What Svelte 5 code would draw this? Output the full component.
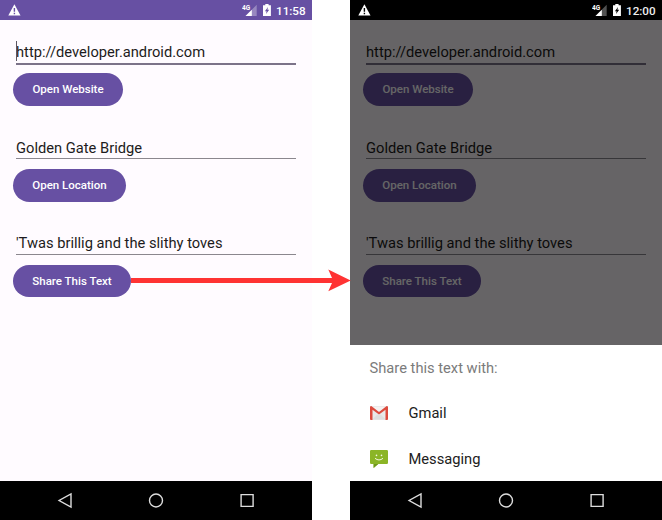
<script>
  const phones = [
    { time: '11:58', sharing: false },
    { time: '12:00', sharing: true }
  ];
  const rows = [
    { value: 'http://developer.android.com', action: 'Open Website', width: 110 },
    { value: 'Golden Gate Bridge', action: 'Open Location', width: 113 },
    { value: "'Twas brillig and the slithy toves", action: 'Share This Text', width: 118 }
  ];
</script>

<main>
  {#each phones as phone}
    <section class="phone" class:sharing={phone.sharing}>
      <header>
        <svg class="warn" width="13" height="12" viewBox="0 0 13 12">
          <path d="M6.4.3 12.5 11.4H.3Z" fill="#fff" />
          <path d="M6.4 4v3.8M6.4 8.8v1.4" stroke="var(--bar)" stroke-width="1.4" />
        </svg>
        <span class="spacer"></span>
        <svg class="status" width="30" height="14" viewBox="0 0 30 14">
          <path d="M14.7 1.8V13H3.5Z" fill="#fff" opacity=".32" />
          <path d="M9.8 6.7V13H3.5Z" fill="#fff" />
          <text x="0" y="6.7" class="net">4G</text>
          <path d="M23.3 1h3.3v1.2h2.3V13H21V2.2h2.3Z" fill="#fff" />
          <path d="M26 4 22.9 8.2H24.6L24 11 27.2 6.8H25.4Z" fill="var(--bar)" />
        </svg>
        <time>{phone.time}</time>
      </header>

      <div class="screen">
        {#each rows as row, i}
          <div class="row">
            <div class="field" class:focused={i === 0}>
              {#if i === 0 && !phone.sharing}<i class="caret"></i>{/if}
              <span>{row.value}</span>
            </div>
            <button style:width="{row.width}px">{row.action}</button>
          </div>
        {/each}
        {#if phone.sharing}
          <div class="scrim"></div>
          <div class="sheet">
            <h2>Share this text with:</h2>
            <div class="app">
              <svg width="18" height="14" viewBox="0 0 18 14">
                <rect width="18" height="14" rx="1" fill="#e9e9e9" />
                <path d="M2.4 13.5 7.4 8.4 9 9.6l1.6-1.2 5 5.1Z" fill="#dedede" />
                <path d="M2 .7 9 6 16 .7Z" fill="#f5f3f2" />
                <path d="M0 1.2Q0 0 1.3 0L9 5.9 16.7 0Q18 0 18 1.2V13q0 1-1 1H15.5V3.7L9 8.4 2.5 3.7V14H1q-1 0-1-1Z" fill="#dc4b3e" />
              </svg>
              <span>Gmail</span>
            </div>
            <div class="app">
              <svg width="18" height="18" viewBox="0 0 18 18">
                <path d="M1.2 0H16.8Q18 0 18 1.2V12.8Q18 14 16.8 14H8.2L3.6 18V14H1.2Q0 14 0 12.8V1.2Q0 0 1.2 0Z" fill="#8bb526" />
                <path d="M3.6 14H8.2L3.6 18Z" fill="#6f981c" />
                <path d="M5 8.3Q9 11.6 13 8.3" fill="none" stroke="#f2f7df" stroke-width="1" />
                <circle cx="6.5" cy="5.4" r=".8" fill="#f2f7df" />
                <circle cx="11.5" cy="5.4" r=".8" fill="#f2f7df" />
              </svg>
              <span>Messaging</span>
            </div>
          </div>
        {/if}
      </div>

      <nav>
        <svg width="16" height="17" viewBox="0 0 16 17"><path d="M14 1.9V15.1L2.1 8.5Z" /></svg>
        <svg width="16" height="17" viewBox="0 0 16 17"><circle cx="8" cy="8.5" r="6.5" /></svg>
        <svg width="16" height="17" viewBox="0 0 16 17"><path d="M2.1 2.6h12v11.8h-12Z" /></svg>
      </nav>
    </section>
  {/each}

  <svg class="arrow" width="220" height="24" viewBox="0 0 220 24">
    <path d="M0 10H201L197.3 1.5 219.7 12.5 197.3 23.3 201 15H0Z" fill="#ff3333" />
  </svg>
</main>

<style>
  :global(body) { background: #fff; }
  main {
    position: relative;
    display: flex;
    gap: 38px;
    width: 662px;
    height: 520px;
    overflow: hidden;
    font-family: Roboto, sans-serif;
    color: #1d1b20;
  }
  .phone {
    --bar: #6750a3;
    width: 312px;
    display: flex;
    flex-direction: column;
  }
  .sharing { --bar: #000; }
  header {
    height: 20px;
    display: flex;
    align-items: center;
    box-sizing: border-box;
    padding: 0 7px 0 8px;
    background: var(--bar);
    color: #fff;
  }
  .spacer { flex: 1; }
  .status { margin: 0 4px 1px 0; }
  .net { font: 700 6.5px Roboto, sans-serif; fill: #fff; }
  time {
    width: 29px;
    font-size: 11.7px;
    font-weight: 500;
    line-height: 20px;
    white-space: nowrap;
    padding-top: 1px;
  }
  .sharing header { color: #eee; }
  .screen {
    position: relative;
    height: 461px;
    box-sizing: border-box;
    padding: 18px 16px 0;
    background: #fffbff;
  }
  .row { height: 95.6px; }
  .field {
    position: relative;
    height: 24.8px;
    border-bottom: 1px solid #8b878e;
    margin-bottom: 9.8px;
    font-size: 14.7px;
    line-height: 29px;
    white-space: nowrap;
  }
  .field.focused {
    border-bottom: 2px solid #7c7389;
    margin-bottom: 8.6px;
    line-height: 28px;
  }
  .caret { position: absolute; left: 0; top: 3px; width: 1px; height: 20px; background: #5c5763; }
  button {
    display: block;
    height: 32.5px;
    margin-left: -3px;
    padding: 0;
    border: 0;
    border-radius: 17px;
    background: #6750a3;
    color: #fff;
    font: 500 11.5px/33.4px Roboto, sans-serif;
    white-space: nowrap;
  }
  .scrim { position: absolute; inset: 0; background: rgba(0, 0, 0, .6); }
  .sheet {
    position: absolute;
    left: 0;
    right: 0;
    bottom: 0;
    height: 136px;
    box-sizing: border-box;
    padding: 0 19.5px;
    background: #fff;
  }
  h2 {
    margin: 0;
    height: 45.5px;
    font-size: 14.7px;
    font-weight: 400;
    line-height: 46px;
    color: #7b7b7b;
    white-space: nowrap;
  }
  .app {
    height: 45.5px;
    display: flex;
    align-items: center;
    gap: 21px;
    font-size: 14.7px;
    color: #212121;
  }
  nav {
    height: 39px;
    display: flex;
    align-items: center;
    justify-content: center;
    gap: 75px;
    background: #000;
  }
  nav svg { fill: none; stroke: #ddd; stroke-width: 1.4; }
  .arrow { position: absolute; left: 131px; top: 268px; }
</style>
